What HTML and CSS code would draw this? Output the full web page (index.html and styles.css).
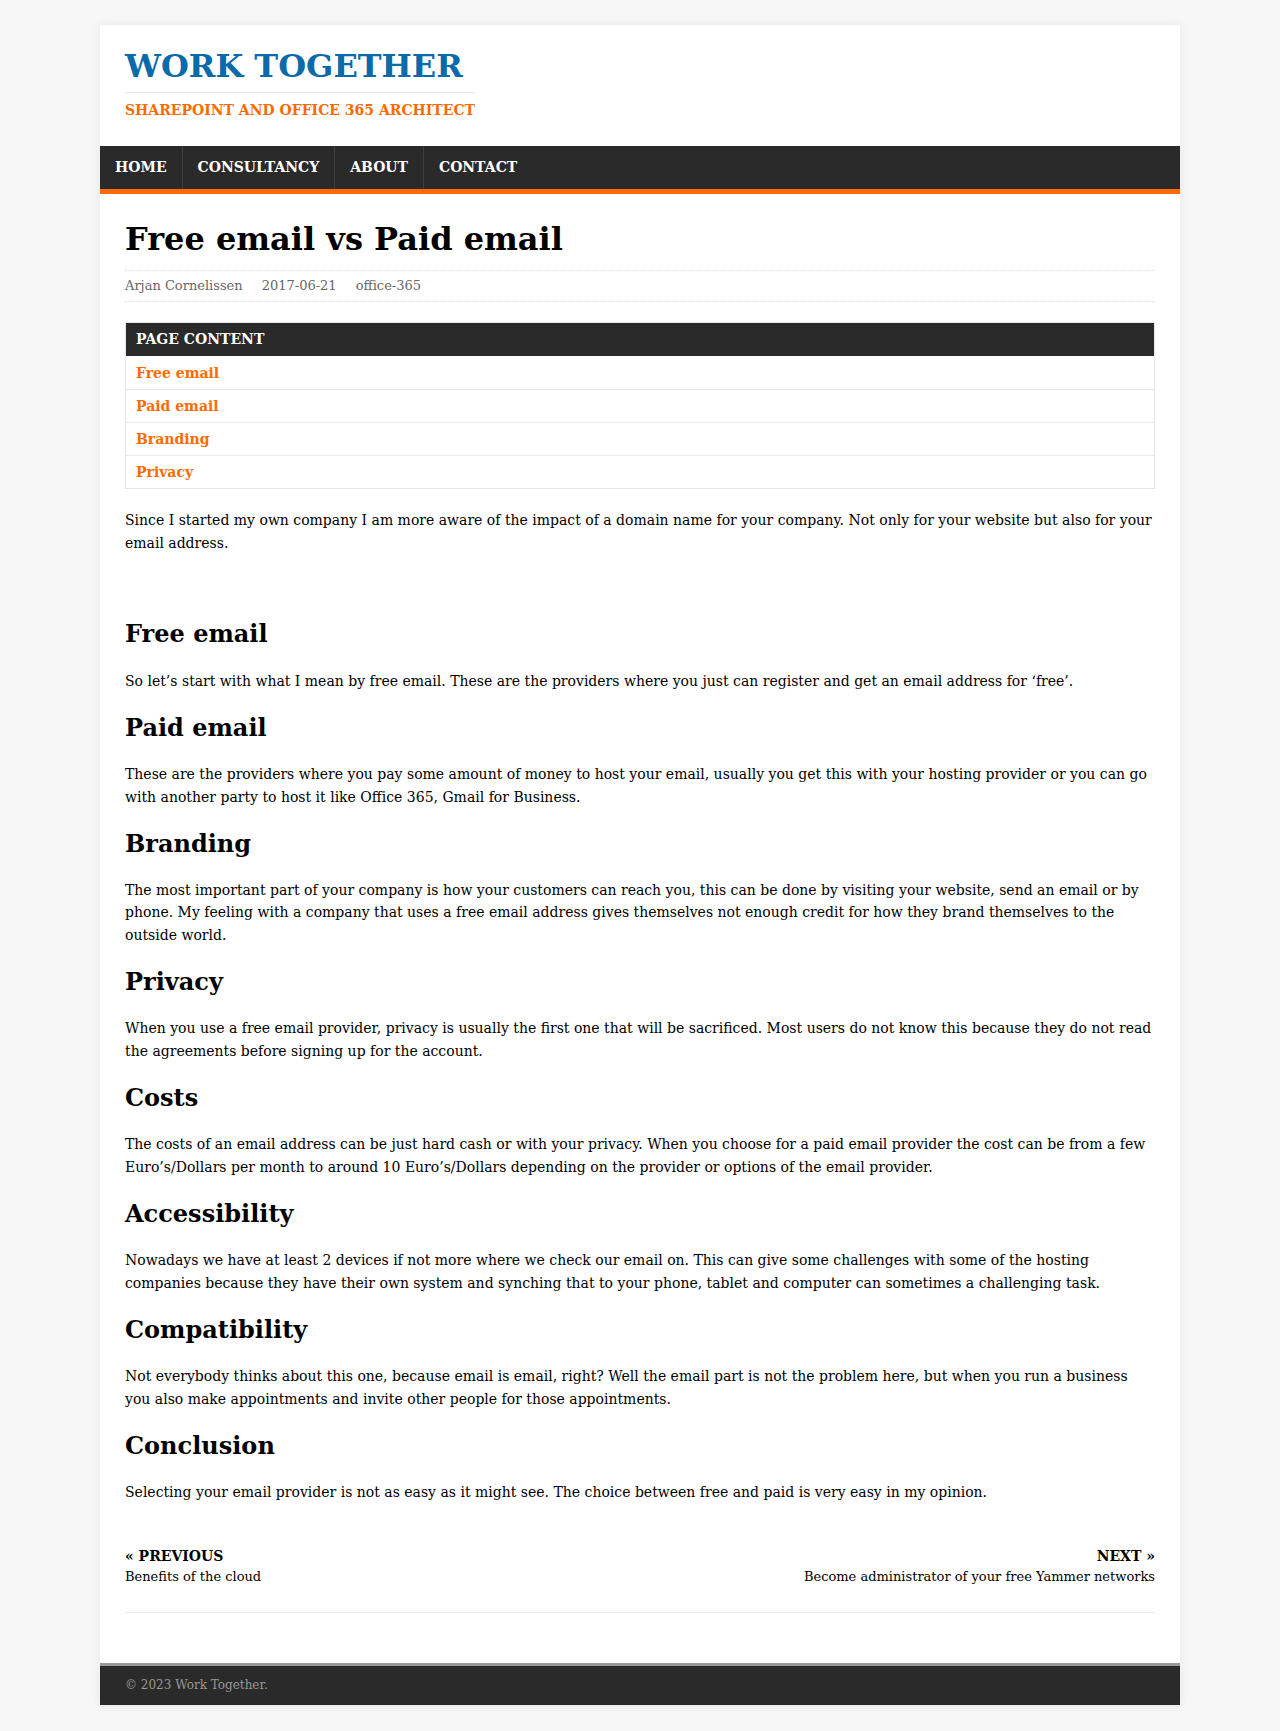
FILE: index.html
```html
<!DOCTYPE html>
<html lang="en">
<head>
<meta charset="utf-8">
<title>Free email vs Paid email – Work Together</title>
<link rel="stylesheet" href="styles.css">
</head>
<body>
<div class="wrapper">
  <header class="site-header">
    <div class="brand">
      <div class="site-title">WORK TOGETHER</div>
      <div class="site-tagline">SHAREPOINT AND OFFICE 365 ARCHITECT</div>
    </div>
  </header>
  <nav class="main-nav">
    <ul class="menu">
      <li><a href="#">HOME</a></li>
      <li><a href="#">CONSULTANCY</a></li>
      <li><a href="#">ABOUT</a></li>
      <li><a href="#">CONTACT</a></li>
    </ul>
  </nav>
  <main class="content">
    <article class="post">
      <h1 class="post-title">Free email vs Paid email</h1>
      <div class="post-meta">
        <span>Arjan Cornelissen</span>
        <span>2017-06-21</span>
        <span>office-365</span>
      </div>
      <div class="toc">
        <div class="toc-head">PAGE CONTENT</div>
        <a class="toc-item" href="#">Free email</a>
        <a class="toc-item" href="#">Paid email</a>
        <a class="toc-item" href="#">Branding</a>
        <a class="toc-item" href="#">Privacy</a>
      </div>
      <p>Since I started my own company I am more aware of the impact of a domain name for your company. Not only for your website but also for your email address.</p>
      <p class="spacer">&nbsp;</p>
      <h2>Free email</h2>
      <p>So let’s start with what I mean by free email. These are the providers where you just can register and get an email address for ‘free’.</p>
      <h2>Paid email</h2>
      <p>These are the providers where you pay some amount of money to host your email, usually you get this with your hosting provider or you can go with another party to host it like Office 365, Gmail for Business.</p>
      <h2>Branding</h2>
      <p>The most important part of your company is how your customers can reach you, this can be done by visiting your website, send an email or by phone. My feeling with a company that uses a free email address gives themselves not enough credit for how they brand themselves to the outside world.</p>
      <h2>Privacy</h2>
      <p>When you use a free email provider, privacy is usually the first one that will be sacrificed. Most users do not know this because they do not read the agreements before signing up for the account.</p>
      <h2>Costs</h2>
      <p>The costs of an email address can be just hard cash or with your privacy. When you choose for a paid email provider the cost can be from a few Euro’s/Dollars per month to around 10 Euro’s/Dollars depending on the provider or options of the email provider.</p>
      <h2>Accessibility</h2>
      <p>Nowadays we have at least 2 devices if not more where we check our email on. This can give some challenges with some of the hosting companies because they have their own system and synching that to your phone, tablet and computer can sometimes a challenging task.</p>
      <h2>Compatibility</h2>
      <p>Not everybody thinks about this one, because email is email, right? Well the email part is not the problem here, but when you run a business you also make appointments and invite other people for those appointments.</p>
      <h2>Conclusion</h2>
      <p>Selecting your email provider is not as easy as it might see. The choice between free and paid is very easy in my opinion.</p>
    </article>
    <nav class="post-nav">
      <a class="post-nav-item" href="#">
        <span class="post-nav-label">« PREVIOUS</span>
        <span class="post-nav-title">Benefits of the cloud</span>
      </a>
      <a class="post-nav-item post-nav-next" href="#">
        <span class="post-nav-label">NEXT »</span>
        <span class="post-nav-title">Become administrator of your free Yammer networks</span>
      </a>
    </nav>
  </main>
  <footer class="site-footer">© 2023 Work Together.</footer>
</div>
</body>
</html>
```
FILE: styles.css
```css
html, body {
  margin: 0;
  padding: 0;
}
body {
  background: #f7f7f7;
  font-family: "DejaVu Serif", serif;
  font-size: 14px;
  line-height: 1.6;
  color: #000;
}
a {
  text-decoration: none;
}
.wrapper {
  width: 1080px;
  margin: 25px auto;
  background: #fff;
  box-shadow: 0 0 10px rgba(0, 0, 0, 0.08);
}
.site-header {
  padding: 21px 25px 25px;
}
.brand {
  display: inline-flex;
  flex-direction: column;
}
.site-title {
  font-size: 32px;
  line-height: 1.3;
  font-weight: bold;
  color: #0b6aa9;
  padding-bottom: 4px;
  border-bottom: 1px solid #e5e5e5;
}
.site-tagline {
  font-size: 14px;
  line-height: 21px;
  font-weight: bold;
  color: #fe6a00;
  padding-top: 7px;
}
.main-nav {
  background: #2a2a2a;
  border-bottom: 5px solid #fe6a00;
}
.menu {
  display: flex;
  margin: 0;
  padding: 0;
  list-style: none;
}
.menu li + li {
  border-left: 1px solid #3e3e3e;
}
.menu a {
  display: block;
  padding: 10px 15px;
  line-height: 23px;
  font-size: 14px;
  font-weight: bold;
  color: #fff;
}
.content {
  padding: 25px 25px 50px;
}
.post-title {
  font-size: 32px;
  line-height: 1.3;
  margin: 0 0 10px;
}
.post-meta {
  display: flex;
  gap: 19px;
  border-top: 1px dotted #ddd;
  border-bottom: 1px dotted #ddd;
  padding: 5px 0;
  font-size: 13px;
  line-height: 20px;
  color: #666;
}
.toc {
  margin: 20px 0;
  border: 1px solid #e5e5e5;
  display: flex;
  flex-direction: column;
}
.toc-head {
  background: #2a2a2a;
  color: #fff;
  font-weight: bold;
  padding: 5px 10px;
  line-height: 23px;
}
.toc-item {
  color: #fe6a00;
  font-weight: bold;
  padding: 5px 10px;
  line-height: 22px;
  border-top: 1px solid #ebebeb;
}
.toc-head + .toc-item {
  border-top: 0;
  padding-top: 6px;
}
.post p {
  margin: 0 0 20px;
}
.post p.spacer {
  margin-bottom: 22px;
}
.post h2 {
  font-size: 24px;
  line-height: 1.3;
  margin: 0 0 20px;
}
.post-nav {
  display: flex;
  justify-content: space-between;
  padding: 21px 0 25px;
  border-bottom: 1px solid #eee;
}
.post-nav-item {
  display: flex;
  flex-direction: column;
  color: #000;
}
.post-nav-next {
  align-items: flex-end;
  text-align: right;
}
.post-nav-label {
  font-weight: bold;
  font-size: 14px;
  line-height: 22px;
}
.post-nav-title {
  font-size: 13px;
  line-height: 20px;
}
.site-footer {
  background: #2a2a2a;
  border-top: 3px solid #999;
  padding: 10px 25px;
  font-size: 12px;
  line-height: 19px;
  color: #999;
}
```
